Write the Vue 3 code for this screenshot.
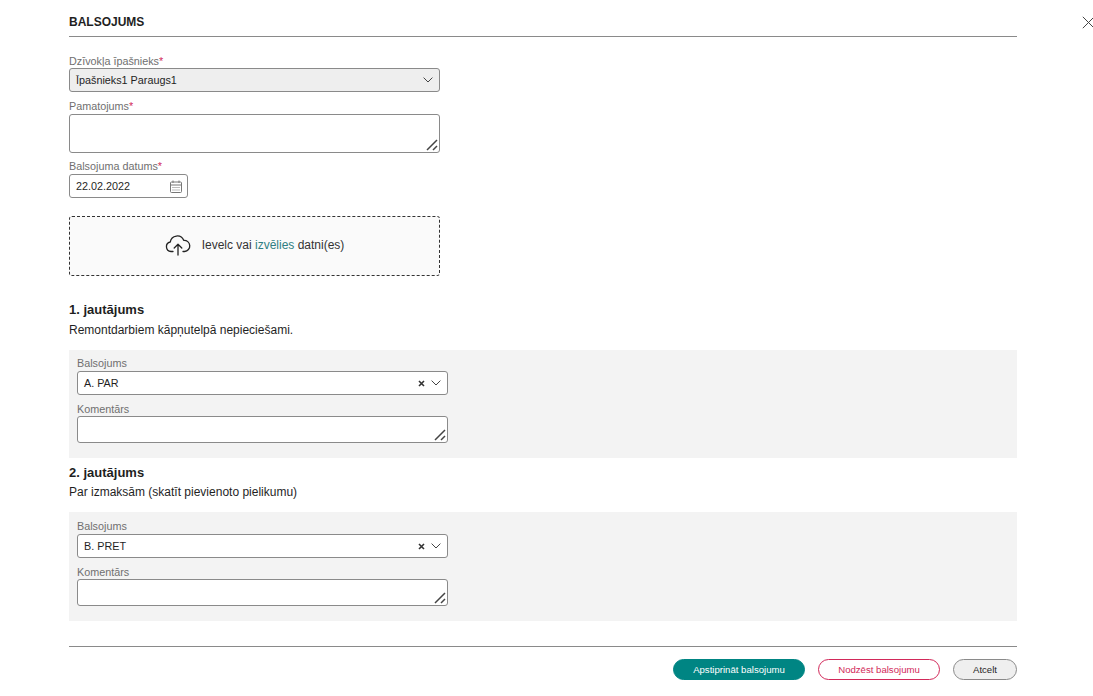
<script setup>
const questions = [
  { title: '1. jautājums', text: 'Remontdarbiem kāpņutelpā nepieciešami.', vote: 'A. PAR' },
  { title: '2. jautājums', text: 'Par izmaksām (skatīt pievienoto pielikumu)', vote: 'B. PRET' }
]
</script>

<template>
  <div class="page">
    <button class="close" aria-label="Aizvērt">
      <svg width="13" height="13" viewBox="0 0 13 13"><path d="M.8.8l11.4 11.4M12.2.8L.8 12.2" stroke="#444" stroke-width="1" fill="none"/></svg>
    </button>
    <h1 class="title">BALSOJUMS</h1>

    <label class="lbl first">Dzīvokļa īpašnieks<i>*</i></label>
    <div class="control select disabled">
      <span class="val">Īpašnieks1 Paraugs1</span>
      <svg class="chev" width="10" height="6" viewBox="0 0 10 6"><path d="M.6.6L5 5 9.4.6" stroke="#444" fill="none"/></svg>
    </div>

    <label class="lbl mt1">Pamatojums<i>*</i></label>
    <div class="control area a39">
      <svg class="grip" width="12" height="12" viewBox="0 0 12 12"><path d="M1 11L11 1M7 11l4-4" stroke="#444" stroke-width="1.5" fill="none"/></svg>
    </div>

    <label class="lbl mt2">Balsojuma datums<i>*</i></label>
    <div class="control date">
      <span class="val">22.02.2022</span>
      <svg class="cal" width="12" height="13" viewBox="0 0 12 13"><g fill="none" stroke="#777"><rect x=".5" y="2" width="11" height="10.5" rx="1"/><path d="M.5 5h11M3 .5v2.5M9 .5v2.5"/><path d="M2.5 7.5h7M2.5 10h7" stroke-dasharray="1 1"/></g></svg>
    </div>

    <div class="drop">
      <svg class="cloud" width="26" height="22" viewBox="0 0 26 22"><g fill="none" stroke="#222" stroke-width="1.3" stroke-linecap="round" stroke-linejoin="round"><path d="M8 17.5H6a4.8 4.8 0 0 1-.7-9.5 7 7 0 0 1 13.4-1.7 5.6 5.6 0 0 1 .9 11.2h-1.6"/><path d="M13 21V10.5M9.2 14L13 10.3l3.8 3.7"/></g></svg>
      <span>Ievelc vai <a>izvēlies</a> datni(es)</span>
    </div>

    <section v-for="(q, i) in questions" :key="q.title" :class="['question', { second: i === 1 }]">
      <h2 class="qtitle">{{ q.title }}</h2>
      <p class="qtext">{{ q.text }}</p>
      <div class="panel">
        <label class="lbl">Balsojums</label>
        <div class="control select">
          <span class="val">{{ q.vote }}</span>
          <svg class="x" width="7" height="7" viewBox="0 0 7 7"><path d="M1 1l5 5M6 1L1 6" stroke="#333" stroke-width="1.6" fill="none"/></svg>
          <svg class="chev" width="10" height="6" viewBox="0 0 10 6"><path d="M.6.6L5 5 9.4.6" stroke="#444" fill="none"/></svg>
        </div>
        <label class="lbl comment">Komentārs</label>
        <div class="control area a27">
          <svg class="grip" width="12" height="12" viewBox="0 0 12 12"><path d="M1 11L11 1M7 11l4-4" stroke="#444" stroke-width="1.5" fill="none"/></svg>
        </div>
      </div>
    </section>

    <footer class="foot">
      <button class="btn primary">Apstiprināt balsojumu</button>
      <button class="btn danger">Nodzēst balsojumu</button>
      <button class="btn plain">Atcelt</button>
    </footer>
  </div>
</template>

<style scoped>
.page {
  position: relative;
  box-sizing: border-box;
  width: 1093px;
  height: 696px;
  padding: 0 76px 0 69px;
  background: #fff;
  font-family: "Liberation Sans", Arial, sans-serif;
  font-size: 10.8px;
  color: #1f1f1f;
  overflow: hidden;
}
.close {
  position: absolute;
  top: 16px;
  left: 1082px;
  padding: 0;
  border: 0;
  background: none;
  line-height: 0;
}
.title {
  margin: 0;
  height: 37px;
  box-sizing: border-box;
  padding-top: 16px;
  line-height: 13px;
  font-size: 12px;
  font-weight: 700;
  border-bottom: 1px solid #8a8a8a;
}
.lbl {
  display: block;
  height: 13px;
  line-height: 13px;
  color: #6f6f6f;
}
.lbl i { font-style: normal; color: #d2295a; }
.first { margin-top: 18px; }
.mt1 { margin-top: 8px; }
.mt2 { margin-top: 7px; }
.control {
  position: relative;
  box-sizing: border-box;
  display: flex;
  align-items: center;
  width: 371px;
  border: 1px solid #8a8a8a;
  border-radius: 3px;
  background: #fff;
  color: #1f1f1f;
}
.select { height: 24px; padding: 0 6px; }
.disabled { background: #eee; }
.val { flex: 1; }
.chev { margin-left: 6px; }
.disabled .chev { margin-right: 0; }
.area { display: block; }
.a39 { height: 39px; margin-top: 1px; }
.a27 { height: 27px; }
.grip { position: absolute; right: 1px; bottom: 1px; }
.date { width: 119px; height: 24px; margin-top: 1px; padding: 0 6px; }
.cal { margin-right: -1px; }
.drop {
  box-sizing: border-box;
  display: flex;
  align-items: center;
  justify-content: center;
  gap: 11px;
  width: 371px;
  height: 60px;
  margin-top: 18px;
  padding-bottom: 2px;
  border: 1px dashed #333;
  border-radius: 3px;
  background: #fafafa;
  font-size: 12px;
  color: #333;
}
.drop a { color: #2f7f83; }
.question { margin-top: 26px; }
.question.second { margin-top: 7px; }
.qtitle {
  margin: 0;
  height: 15px;
  line-height: 15px;
  font-size: 13px;
  font-weight: 700;
}
.qtext {
  margin: 6px 0 0;
  height: 14px;
  line-height: 14px;
  font-size: 12px;
}
.second .qtext { margin-top: 5px; }
.panel {
  box-sizing: border-box;
  margin-top: 13px;
  padding: 7px 8px 15px;
  height: 108px;
  background: #f3f3f3;
}
.second .panel { padding-top: 8px; height: 109px; }
.panel .lbl { height: 14px; }
.panel .comment { height: 13px; margin-top: 8px; }
.foot {
  display: flex;
  justify-content: flex-end;
  gap: 13px;
  margin-top: 25px;
  padding-top: 12px;
  border-top: 1px solid #8a8a8a;
}
.btn {
  box-sizing: border-box;
  height: 21px;
  padding: 0;
  border: 1px solid #8a8a8a;
  border-radius: 11px;
  font-family: inherit;
  font-size: 9.6px;
}
.primary { width: 132px; background: #008583; border-color: #008583; color: #fff; }
.danger { width: 122px; background: #fff; border-color: #d2295a; color: #d2295a; }
.plain { width: 64px; background: #efefef; color: #1f1f1f; }
</style>
